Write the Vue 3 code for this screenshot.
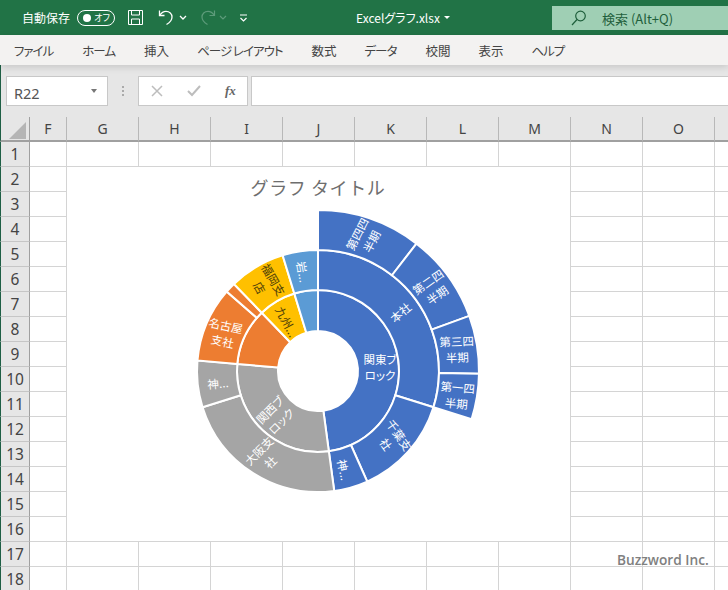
<script setup>
const columns = ["F", "G", "H", "I", "J", "K", "L", "M", "N", "O", ""];
const rows = Array.from({ length: 18 }, (_, i) => i + 1);
const tabs = [
  { name: "ファイル", kana: true },
  { name: "ホーム", kana: true },
  { name: "挿入" },
  { name: "ページ レイアウト", kana: true },
  { name: "数式" },
  { name: "データ", kana: true },
  { name: "校閲" },
  { name: "表示" },
  { name: "ヘルプ", kana: true },
];

const cx = 318;
const cy = 371;
const blue = "#4472c4";
const orange = "#ed7d31";
const gray = "#a5a5a5";
const yellow = "#ffc000";
const sky = "#5b9bd5";

// [inner radius, outer radius, start deg, end deg, colour]
const sectors = [
  [40, 81, 0, 172.3, blue],
  [40, 81, 172.3, 275, gray],
  [40, 81, 275, 316, orange],
  [40, 81, 316, 343, yellow],
  [40, 81, 343, 360, sky],
  [81, 121, 0, 107.4, blue],
  [81, 121, 107.4, 156, blue],
  [81, 121, 156, 172.3, blue],
  [81, 121, 172.3, 252.6, gray],
  [81, 121, 252.6, 275, gray],
  [81, 121, 275, 311, orange],
  [81, 121, 311, 316, orange],
  [81, 121, 316, 343, yellow],
  [81, 121, 343, 360, sky],
  [121, 161, 0, 37.7, blue],
  [121, 161, 37.7, 70, blue],
  [121, 161, 70, 91, blue],
  [121, 161, 91, 107.4, blue],
];

const labels = [
  { x: 365, y: 238, rot: -63, lines: ["第四四", "半期"] },
  { x: 433, y: 289, rot: -35, lines: ["第二四", "半期"] },
  { x: 457, y: 350, rot: -2, lines: ["第三四", "半期"] },
  { x: 457, y: 396, rot: 5, lines: ["第一四", "半期"] },
  { x: 401, y: 313, rot: -40, lines: ["本社"] },
  { x: 380, y: 368, rot: 0, lines: ["関東ブ", "ロック"] },
  { x: 392, y: 440, rot: 55, lines: ["千葉支", "社"] },
  { x: 343, y: 470, rot: 78, lines: ["神..."] },
  { x: 265, y: 457, rot: -45, lines: ["大阪支", "社"] },
  { x: 276, y: 416, rot: -45, lines: ["関西ブ", "ロック"] },
  { x: 218, y: 384, rot: -5, lines: ["神..."] },
  { x: 224, y: 334, rot: 12, lines: ["名古屋", "支社"] },
  { x: 266, y: 284, rot: 60, lines: ["福岡支", "店"], dark: true },
  { x: 286, y: 322, rot: 62, lines: ["九州..."], dark: true },
  { x: 302, y: 272, rot: 80, lines: ["岩..."] },
];

const point = (r, deg) => {
  const a = (deg * Math.PI) / 180;
  return `${(cx + r * Math.sin(a)).toFixed(2)} ${(cy - r * Math.cos(a)).toFixed(2)}`;
};

const arcPath = ([r0, r1, from, to]) => {
  const large = to - from > 180 ? 1 : 0;
  return `M${point(r1, from)} A${r1} ${r1} 0 ${large} 1 ${point(r1, to)} L${point(r0, to)} A${r0} ${r0} 0 ${large} 0 ${point(r0, from)} Z`;
};
</script>

<template>
  <div class="app">
    <header class="titlebar">
      <span class="autosave">自動保存</span>
      <span class="toggle"><i></i><b>オフ</b></span>
      <svg class="save" width="17" height="17" viewBox="0 0 17 17" fill="none" stroke="#fff" stroke-width="1">
        <path d="M1.5 1.5h14v14h-14z" />
        <path d="M4.5 1.5v4.5h8v-4.5M4.5 15.5v-5.5h8v5.5" />
      </svg>
      <svg class="undo" width="17" height="17" viewBox="0 0 17 17" fill="none" stroke="#fff" stroke-width="1.3">
        <path d="M1.5 1.5v5h5" />
        <path d="M1.5 6.5c2-3 4-4.2 6.5-4.2 3.5 0 6 2.5 6 5.7 0 3-2 5.5-5.5 7.5" />
      </svg>
      <svg class="chev" width="8" height="5" viewBox="0 0 8 5" fill="none" stroke="#fff" stroke-width="1.3"><path d="M1 1l3 3 3-3" /></svg>
      <svg class="redo" width="17" height="17" viewBox="0 0 17 17" fill="none" stroke="#5d9b7a" stroke-width="1.2">
        <path d="M15.5 1.5v5h-5" />
        <path d="M15.5 6.5c-2-3-4-4.2-6.5-4.2-3.5 0-6 2.5-6 5.7 0 3 2 5.5 5.5 7.5" />
      </svg>
      <svg class="chev dim" width="8" height="5" viewBox="0 0 8 5" fill="none" stroke="#5d9b7a" stroke-width="1.2"><path d="M1 1l3 3 3-3" /></svg>
      <svg class="custom" width="9" height="8" viewBox="0 0 9 8" fill="none" stroke="#fff" stroke-width="1.2">
        <path d="M1 1h7M1.5 4l3 3 3-3" />
      </svg>
      <span class="filename">Excelグラフ.xlsx</span>
      <span class="caret"></span>
      <div class="search">
        <svg width="16" height="16" viewBox="0 0 16 16" fill="none" stroke="#1f5f3c" stroke-width="1.2">
          <circle cx="9.5" cy="6" r="4.8" />
          <path d="M6 9.5L1 15" />
        </svg>
        <span>検索 (Alt+Q)</span>
      </div>
    </header>

    <nav class="ribbon">
      <span v-for="tab in tabs" :key="tab.name" :class="{ kana: tab.kana }">{{ tab.name }}</span>
    </nav>

    <section class="formula">
      <div class="namebox"><span>R22</span><i></i></div>
      <div class="grip"><i></i><i></i><i></i></div>
      <div class="fxbox">
        <svg width="12" height="12" viewBox="0 0 12 12" fill="none" stroke="#bdbdbd" stroke-width="1.5"><path d="M1 1l10 10M11 1L1 11" /></svg>
        <svg width="14" height="12" viewBox="0 0 14 12" fill="none" stroke="#bdbdbd" stroke-width="2"><path d="M1 6l4 4 8-9" /></svg>
        <em>fx</em>
      </div>
      <div class="input"></div>
    </section>

    <main class="sheet">
      <div class="corner"><i></i></div>
      <div v-for="col in columns" :key="'c' + col" class="colhead">{{ col }}</div>
      <template v-for="row in rows" :key="row">
        <div class="rowhead">{{ row }}</div>
        <div v-for="col in columns" :key="col" class="cell"></div>
      </template>

      <div class="chart">
        <svg width="503" height="374" viewBox="67 167 503 374">
          <text class="chart-title" x="318" y="187">グラフ タイトル</text>
          <path v-for="(s, i) in sectors" :key="i" :d="arcPath(s)" :fill="s[4]" stroke="#fff" stroke-width="2" />
          <g v-for="l in labels" :key="l.x + '-' + l.y" :transform="`translate(${l.x} ${l.y}) rotate(${l.rot})`">
            <text
              v-for="(line, i) in l.lines"
              :key="i"
              class="label"
              :class="{ dark: l.dark }"
              x="0"
              :y="(i - (l.lines.length - 1) / 2) * 16 + 4"
            >{{ line }}</text>
          </g>
        </svg>
      </div>

      <div class="watermark">Buzzword Inc.</div>
    </main>
  </div>
</template>

<style scoped>
.app {
  position: relative;
  width: 728px;
  height: 590px;
  overflow: hidden;
  background: #e6e6e6;
  font-family: "Noto Sans CJK JP", "Noto Sans", sans-serif;
  font-feature-settings: "palt";
}

.titlebar {
  display: flex;
  align-items: center;
  height: 35px;
  background: #217346;
  color: #fff;
  font-size: 12px;
}

.autosave {
  margin-left: 22px;
  width: 48px;
  white-space: nowrap;
}

.toggle {
  display: flex;
  align-items: center;
  justify-content: space-between;
  box-sizing: border-box;
  width: 38px;
  height: 16px;
  margin-left: 7px;
  padding: 0 4px 0 5px;
  border: 1px solid #fff;
  border-radius: 8px;
}

.toggle i {
  width: 8px;
  height: 8px;
  border-radius: 50%;
  background: #fff;
}

.toggle b {
  font-size: 9px;
  font-weight: 400;
}

.save {
  margin-left: 12px;
}

.undo {
  margin-left: 14px;
}

.chev {
  margin-left: 4px;
}

.redo {
  margin-left: 12px;
}

.chev.dim {
  margin-left: 3px;
}

.custom {
  margin-left: 12px;
}

.filename {
  margin-left: 108px;
  width: 84px;
  white-space: nowrap;
}

.caret {
  width: 0;
  height: 0;
  margin-left: 4px;
  border-left: 3px solid transparent;
  border-right: 3px solid transparent;
  border-top: 3px solid #fff;
}

.search {
  display: flex;
  align-items: center;
  position: absolute;
  left: 552px;
  top: 6px;
  width: 176px;
  height: 24px;
  padding-left: 19px;
  box-sizing: border-box;
  background: #9fcfb4;
  color: #1f5f3c;
  font-size: 13px;
}

.search span {
  margin-left: 15px;
}

.ribbon {
  position: relative;
  z-index: 1;
  display: flex;
  align-items: center;
  gap: 28px;
  height: 30px;
  padding-left: 14px;
  background: #f3f2f1;
  color: #444;
  font-size: 12.5px;
  white-space: nowrap;
  box-shadow: 0 2px 7px rgba(0, 0, 0, 0.14);
}

.ribbon .kana {
  letter-spacing: -1px;
  margin-right: 1px;
}

.formula {
  display: flex;
  align-items: stretch;
  height: 52px;
  padding: 11px 0 11px 6px;
  box-sizing: border-box;
  background: #e6e6e6;
  border-left: 1px solid #1f5f45;
}

.namebox {
  display: flex;
  align-items: center;
  justify-content: space-between;
  box-sizing: border-box;
  width: 102px;
  margin-left: -1px;
  padding: 4px 10px 0 7px;
  background: #fff;
  border: 1px solid #c8c8c8;
  color: #555;
  font-size: 14.5px;
  font-family: "Noto Sans", sans-serif;
}

.namebox i {
  width: 0;
  height: 0;
  margin-top: -4px;
  border-left: 3.5px solid transparent;
  border-right: 3.5px solid transparent;
  border-top: 4px solid #777;
}

.grip {
  display: flex;
  flex-direction: column;
  justify-content: center;
  gap: 2px;
  width: 30px;
  align-items: center;
}

.grip i {
  width: 2px;
  height: 2px;
  background: #aaa;
}

.fxbox {
  display: flex;
  align-items: center;
  box-sizing: border-box;
  width: 110px;
  padding-left: 12px;
  gap: 24px;
  background: #fff;
  border: 1px solid #c8c8c8;
}

.fxbox em {
  font-family: "Liberation Serif", serif;
  font-weight: 700;
  font-size: 13px;
  color: #666;
}

.input {
  flex: 1;
  margin-left: 3px;
  background: #fff;
  border: 1px solid #c8c8c8;
  border-right: 0;
}

.sheet {
  position: relative;
  display: grid;
  grid-template-columns: 30px 37px repeat(10, 72px);
  grid-template-rows: 25px repeat(18, 25px);
  height: 473px;
  overflow: hidden;
  background: #fff;
}

.corner {
  display: flex;
  background: #e6e6e6;
  border-left: 1px solid #1f5f45;
  border-right: 1px solid #a0a0a0;
  border-bottom: 2px solid #a0a0a0;
  box-sizing: border-box;
}

.corner i {
  width: 0;
  height: 0;
  margin: 5px 0 0 8px;
  border-left: 17px solid transparent;
  border-bottom: 17px solid #b5b5b5;
}

.colhead {
  display: flex;
  align-items: center;
  justify-content: center;
  box-sizing: border-box;
  background: #e6e6e6;
  border-right: 1px solid #b8b8b8;
  border-bottom: 2px solid #a0a0a0;
  color: #444;
  font-family: "Noto Sans", sans-serif;
  font-size: 14px;
}

.rowhead {
  display: flex;
  align-items: center;
  justify-content: center;
  box-sizing: border-box;
  background: #e6e6e6;
  border-left: 1px solid #1f5f45;
  border-right: 1px solid #a0a0a0;
  border-bottom: 1px solid #c6c6c6;
  color: #444;
  font-family: "Noto Sans", sans-serif;
  font-size: 15.5px;
}

.cell {
  box-sizing: border-box;
  border-right: 1px solid #d4d4d4;
  border-bottom: 1px solid #d4d4d4;
}

.chart {
  position: absolute;
  left: 67px;
  top: 50px;
  width: 503px;
  height: 374px;
  background: #fff;
}

.chart svg {
  display: block;
}

.chart-title {
  font-size: 18px;
  font-feature-settings: normal;
  fill: #6e6e6e;
  letter-spacing: 0.6px;
  text-anchor: middle;
  dominant-baseline: central;
}

.label {
  font-size: 11.5px;
  fill: #fff;
  text-anchor: middle;
}

.label.dark {
  fill: #4d3d0a;
}

.watermark {
  position: absolute;
  left: 617px;
  top: 433px;
  color: #808080;
  font-family: "Open Sans", sans-serif;
  font-size: 13.7px;
  font-weight: 600;
  white-space: nowrap;
}
</style>
